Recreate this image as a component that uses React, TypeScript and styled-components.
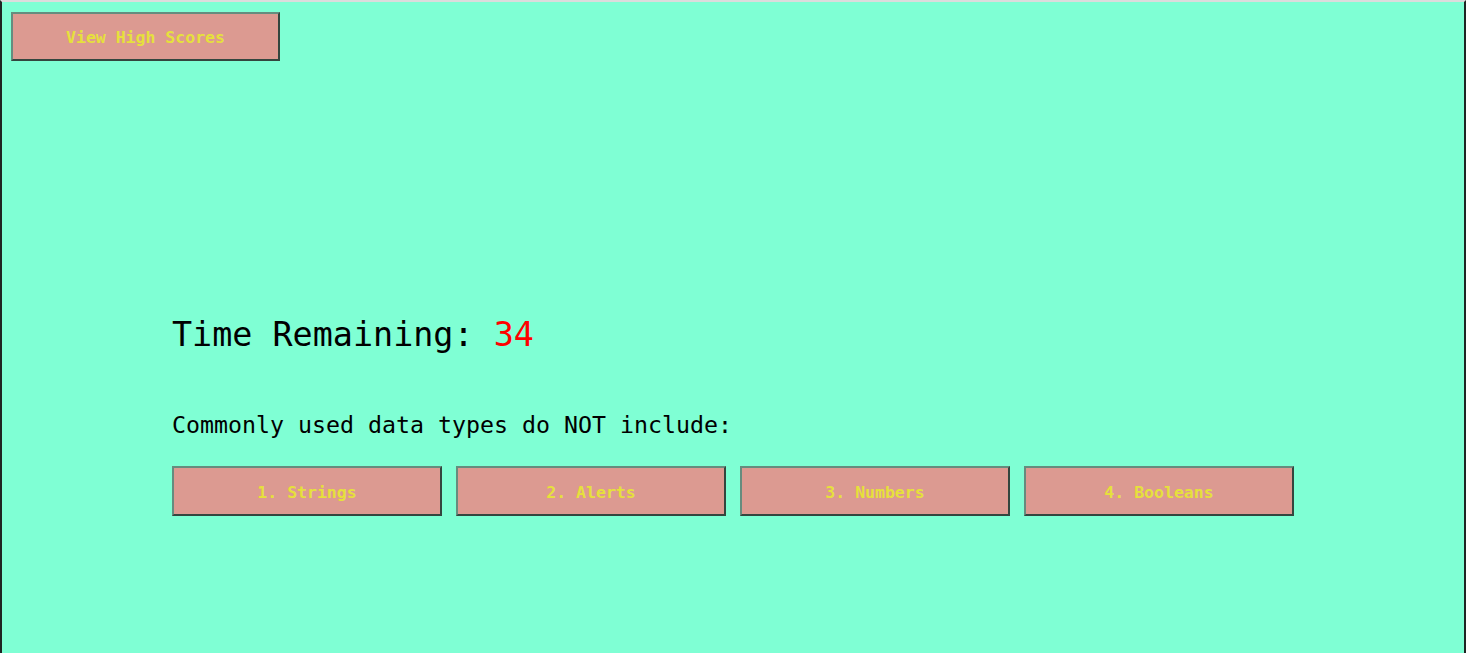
import React from 'react';
import styled, { createGlobalStyle } from 'styled-components';

const GlobalStyle = createGlobalStyle`
    html, body {
        margin: 0;
        padding: 0;
    }
    body {
        font-family: "DejaVu Sans Mono", "Liberation Mono", monospace;
    }
`;

const Page = styled.div`
    box-sizing: border-box;
    min-height: 100vh;
    background: #7fffd4;
    border-top: 2px solid #dcdcdc;
    border-left: 2px solid #1f2523;
    border-right: 2px solid #1f2523;
    padding: 10px 9px 0;
`;

const Button = styled.button<{ $wide?: boolean }>`
    box-sizing: border-box;
    width: ${({ $wide }) => ($wide ? '269px' : '270px')};
    height: ${({ $wide }) => ($wide ? '49px' : '50px')};
    background: #dc9a91;
    color: #e6e03c;
    font-family: "DejaVu Sans Mono", "Liberation Mono", monospace;
    font-weight: bold;
    font-size: 16.5px;
    border: 2px solid;
    border-color: #668c7e #34463f #34463f #668c7e;
    cursor: pointer;
    padding: 2px 0 0;
`;

const Quiz = styled.main`
    padding: 254px 0 0 161px;
`;

const Timer = styled.h1`
    margin: 0;
    font-size: 33.4px;
    font-weight: normal;
    color: #000;

    span {
        color: #ff0000;
    }
`;

const Question = styled.p`
    margin: 57px 0 0;
    font-size: 23.25px;
    color: #000;
`;

const Answers = styled.div`
    display: flex;
    gap: 14px;
    margin-top: 28px;
`;

const answers = ['1. Strings', '2. Alerts', '3. Numbers', '4. Booleans'];

export default function App() {
    return (
        <>
            <GlobalStyle />
            <Page>
                <Button $wide>View High Scores</Button>
                <Quiz>
                    <Timer>
                        Time Remaining: <span>34</span>
                    </Timer>
                    <Question>Commonly used data types do NOT include:</Question>
                    <Answers>
                        {answers.map((answer) => (
                            <Button key={answer}>{answer}</Button>
                        ))}
                    </Answers>
                </Quiz>
            </Page>
        </>
    );
}
